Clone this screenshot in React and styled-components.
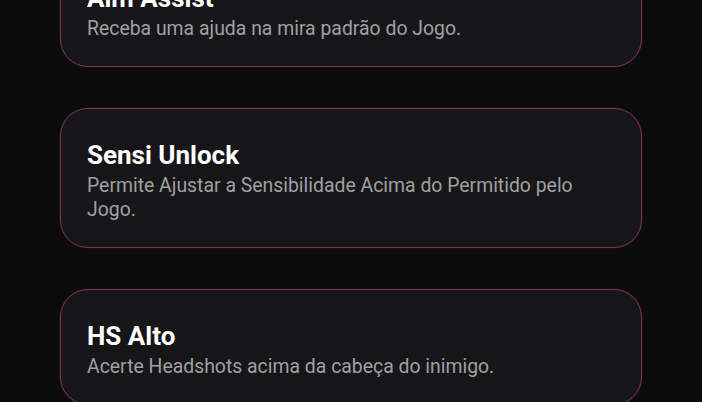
import React from "react";
import styled, { createGlobalStyle } from "styled-components";

const GlobalStyle = createGlobalStyle`
  html, body {
    margin: 0;
    padding: 0;
    background: #0b0b0c;
    overflow: hidden;
  }
  * {
    box-sizing: border-box;
  }
`;

const features = [
  { title: "Aim Assist", text: "Receba uma ajuda na mira padrão do Jogo." },
  {
    title: "Sensi Unlock",
    text: "Permite Ajustar a Sensibilidade Acima do Permitido pelo Jogo.",
  },
  { title: "HS Alto", text: "Acerte Headshots acima da cabeça do inimigo." },
];

function App() {
  return (
    <>
      <GlobalStyle />
      <Page>
        <List>
          {features.map((f) => (
            <Card key={f.title}>
              <Title>{f.title}</Title>
              <Desc>{f.text}</Desc>
            </Card>
          ))}
        </List>
      </Page>
    </>
  );
}

export default App;

const Page = styled.div`
  width: 100vw;
  height: 100vh;
  background: #0b0b0c;
  font-family: Roboto, "Noto Sans", sans-serif;
  overflow: hidden;
`;

const List = styled.div`
  display: flex;
  flex-direction: column;
  gap: 41px;
  padding: 0 60px;
  margin-top: -49px;
`;

const Card = styled.div`
  background: #161618;
  border: 1.5px solid #853350;
  box-shadow: 0 0 2px rgba(150, 50, 80, 0.35);
  border-radius: 28px;
  padding: 31px 26px 25px;
`;

const Title = styled.h2`
  margin: 0 0 4px;
  font-size: 26px;
  line-height: 30px;
  font-weight: 700;
  color: #ffffff;
`;

const Desc = styled.p`
  margin: 0;
  font-size: 19.4px;
  line-height: 24px;
  color: #a0a0a3;
`;
